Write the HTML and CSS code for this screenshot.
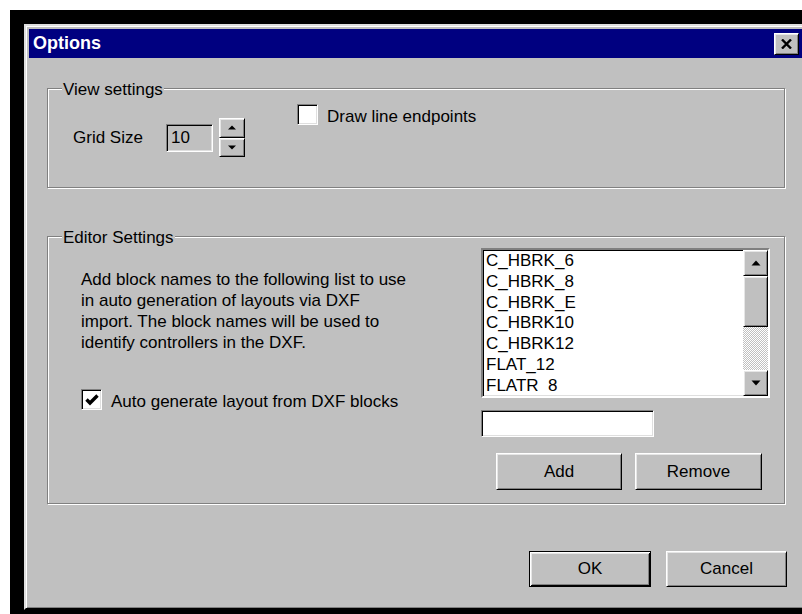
FILE: index.html
```html
<!DOCTYPE html>
<html lang="en">
<head>
<meta charset="utf-8">
<title>Options</title>
<link rel="stylesheet" href="styles.css">
</head>
<body>
<div class="screen">
  <div class="dialog">
    <div class="titlebar">
      <span class="title">Options</span>
      <button class="close" type="button" aria-label="Close">
        <svg width="11" height="10" viewBox="0 0 11 10"><path d="M1 0.5 L10 9.5 M10 0.5 L1 9.5" stroke="#000" stroke-width="2.4"/></svg>
      </button>
    </div>

    <div class="content">
      <section class="group group-view">
        <div class="legend">View settings</div>
        <div class="view-row">
          <div class="grid-field">
            <span class="field-label">Grid Size</span>
            <div class="edit edit-readonly">10</div>
            <div class="spin">
              <button class="raised spin-btn" type="button"><svg width="8" height="5" viewBox="0 0 8 5"><polygon points="4,0.5 8,4.5 0,4.5" fill="#000"/></svg></button>
              <button class="raised spin-btn" type="button"><svg width="8" height="5" viewBox="0 0 8 5"><polygon points="0,0.5 8,0.5 4,4.5" fill="#000"/></svg></button>
            </div>
          </div>
          <label class="check check-endpoints">
            <span class="box"></span>
            <span class="check-text">Draw line endpoints</span>
          </label>
        </div>
      </section>

      <section class="group group-editor">
        <div class="legend">Editor Settings</div>
        <div class="editor-row">
          <div class="editor-left">
            <p class="help">Add block names to the following list to use<br>in auto generation of layouts via DXF<br>import. The block names will be used to<br>identify controllers in the DXF.</p>
            <label class="check check-auto">
              <span class="box"><svg width="14" height="14" viewBox="0 0 14 14"><polyline points="1.5,6.5 5,10 12.5,2.5" fill="none" stroke="#000" stroke-width="3.4"/></svg></span>
              <span class="check-text">Auto generate layout from DXF blocks</span>
            </label>
          </div>
          <div class="editor-right">
            <div class="listbox">
              <ul class="items">
                <li>C_HBRK_6</li>
                <li>C_HBRK_8</li>
                <li>C_HBRK_E</li>
                <li>C_HBRK10</li>
                <li>C_HBRK12</li>
                <li>FLAT_12</li>
                <li>FLATR_8</li>
              </ul>
              <div class="scrollbar">
                <div class="raised sb-btn"><svg width="10" height="6" viewBox="0 0 10 6"><polygon points="5,0.5 9.5,5.5 0.5,5.5" fill="#000"/></svg></div>
                <div class="raised sb-thumb"></div>
                <div class="sb-track"></div>
                <div class="raised sb-btn"><svg width="10" height="6" viewBox="0 0 10 6"><polygon points="0.5,0.5 9.5,0.5 5,5.5" fill="#000"/></svg></div>
              </div>
            </div>
            <div class="edit edit-name"></div>
            <div class="list-buttons">
              <button class="raised btn btn-add" type="button">Add</button>
              <button class="raised btn btn-remove" type="button">Remove</button>
            </div>
          </div>
        </div>
      </section>

      <div class="footer">
        <button class="btn btn-default btn-ok" type="button">OK</button>
        <button class="raised btn btn-cancel" type="button">Cancel</button>
      </div>
    </div>
  </div>
</div>
</body>
</html>
```

FILE: styles.css
```css
html, body {
  margin: 0;
  padding: 0;
  background: #fff;
  overflow: hidden;
}

body {
  font-family: "Liberation Sans", Arial, sans-serif;
  font-size: 17px;
  color: #000;
}

/* black desktop behind the window */
.screen {
  box-sizing: border-box;
  margin: 10px 0 0 10px;
  width: 792px;
  height: 604px;
  padding: 14px 0 0 14px;
  background: #000;
  overflow: hidden;
}

/* window frame */
.dialog {
  box-sizing: border-box;
  width: 783px;
  height: 586px;
  border: 2px solid;
  border-color: #dfdfdf #000 #000 #dfdfdf;
  box-shadow: inset 1px 1px #fff, inset -1px -1px #808080;
  padding: 3px;
  background: #c0c0c0;
  display: flex;
  flex-direction: column;
}

.titlebar {
  height: 29px;
  flex: 0 0 29px;
  background: #000080;
  display: flex;
  align-items: center;
  justify-content: space-between;
  padding: 0 3px 0 4px;
}

.title {
  color: #fff;
  font-weight: bold;
  font-size: 18px;
  line-height: 29px;
}

/* shared 3D bevel */
.raised {
  box-sizing: border-box;
  background: #c0c0c0;
  border: 1px solid;
  border-color: #fff #000 #000 #fff;
  box-shadow: inset 1px 1px #e6e6e6, inset -1px -1px #808080;
}

.close {
  box-sizing: border-box;
  width: 25px;
  height: 22px;
  padding: 0;
  background: #c0c0c0;
  border: 1px solid;
  border-color: #fff #000 #000 #fff;
  box-shadow: inset 1px 1px #e6e6e6, inset -1px -1px #808080;
  display: flex;
  align-items: center;
  justify-content: center;
}

.content {
  flex: 1;
  padding: 0 15px 0 18px;
}

/* etched group box */
.group {
  box-sizing: border-box;
  border: 1px solid #808080;
  box-shadow: inset 1px 1px #fff, 1px 1px #fff;
  margin-right: 2px;
}

.legend {
  width: max-content;
  margin: -9px 0 0 14px;
  padding: 0 1px;
  line-height: 20px;
  background: #c0c0c0;
}

.group-view {
  margin-top: 30px;
  height: 100px;
}

.view-row {
  display: flex;
  align-items: flex-start;
  padding-left: 25px;
}

.grid-field {
  display: flex;
  align-items: center;
  height: 39px;
  margin-top: 18px;
}

.field-label {
  flex: 0 0 93px;
}

/* sunken text field */
.edit {
  box-sizing: border-box;
  border: 1px solid;
  border-color: #808080 #fff #fff #808080;
  box-shadow: inset 1px 1px #000, inset -1px -1px #dfdfdf;
}

.edit-readonly {
  width: 47px;
  height: 28px;
  background: #c0c0c0;
  padding-left: 4px;
  line-height: 26px;
}

.spin {
  margin-left: 6px;
  width: 26px;
  height: 39px;
  display: flex;
  flex-direction: column;
}

.spin-btn {
  flex: 1;
  padding: 0;
  display: flex;
  align-items: center;
  justify-content: center;
}

.check {
  display: flex;
  align-items: flex-start;
}

.check-endpoints {
  margin: 4px 0 0 52px;
}

.box {
  box-sizing: border-box;
  flex: 0 0 21px;
  width: 21px;
  height: 21px;
  background: #fff;
  border: 1px solid;
  border-color: #808080 #fff #fff #808080;
  box-shadow: inset 1px 1px #000, inset -1px -1px #dfdfdf;
  display: flex;
  align-items: center;
  justify-content: center;
}

.check-text {
  margin: 2px 0 0 9px;
  line-height: 21px;
}

.group-editor {
  margin-top: 48px;
  height: 268px;
}

.editor-row {
  display: flex;
  padding-left: 33px;
}

.editor-left {
  flex: 0 0 400px;
}

.help {
  margin: 21px 0 0;
  line-height: 21px;
}

.check-auto {
  margin-top: 36px;
}

.editor-right {
  display: flex;
  flex-direction: column;
}

.listbox {
  box-sizing: border-box;
  width: 289px;
  height: 150px;
  background: #fff;
  border: 2px solid;
  border-color: #808080 #fff #fff #808080;
  box-shadow: inset 1px 1px #000, inset -1px -1px #dfdfdf;
  display: flex;
  align-items: flex-start;
}

.items {
  list-style: none;
  margin: 0;
  padding: 1px 0 0 3px;
  flex: 1;
  height: 143px;
  overflow: hidden;
  box-sizing: border-box;
  line-height: 20.8px;
}

.scrollbar {
  flex: 0 0 25px;
  height: 146px;
  display: flex;
  flex-direction: column;
}

.sb-btn {
  height: 26px;
  flex: 0 0 26px;
  display: flex;
  align-items: center;
  justify-content: center;
}

.sb-thumb {
  height: 51px;
  flex: 0 0 51px;
}

.sb-track {
  flex: 1;
  background: repeating-conic-gradient(#c0c0c0 0% 25%, #fff 0% 50%) 0 0 / 2px 2px;
}

.edit-name {
  margin-top: 12px;
  width: 173px;
  height: 27px;
  background: #fff;
}

.list-buttons {
  display: flex;
  gap: 13px;
  margin: 16px 0 0 15px;
}

.btn {
  font-family: inherit;
  font-size: 17px;
  color: #000;
  padding: 0;
  height: 37px;
}

.btn-add {
  width: 126px;
}

.btn-remove {
  width: 127px;
}

.footer {
  display: flex;
  justify-content: flex-end;
  gap: 15px;
  margin-top: 47px;
}

.btn-ok,
.btn-cancel {
  height: 36px;
}

.btn-ok {
  width: 122px;
}

.btn-cancel {
  width: 121px;
}

/* default push button: extra black frame */
.btn-default {
  box-sizing: border-box;
  background: #c0c0c0;
  border: 1px solid #000;
  box-shadow: inset 1px 1px #fff, inset -1px -1px #000, inset 2px 2px #e6e6e6, inset -2px -2px #808080;
}
```
